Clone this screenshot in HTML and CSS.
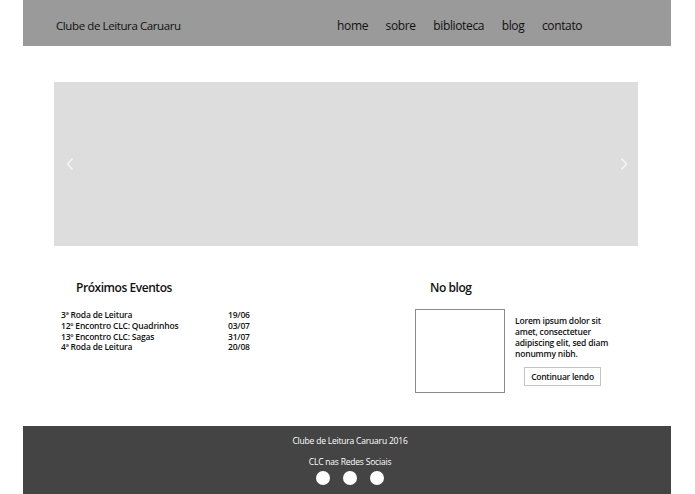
FILE: index.html
```html
<!DOCTYPE html>
<html lang="pt">
<head>
<meta charset="utf-8">
<title>Clube de Leitura Caruaru</title>
<link rel="stylesheet" href="styles.css">
</head>
<body>
<div class="page">
  <header class="header">
    <div class="brand">Clube de Leitura Caruaru</div>
    <nav class="nav">
      <a>home</a><a>sobre</a><a>biblioteca</a><a>blog</a><a>contato</a>
    </nav>
  </header>

  <section class="carousel">
    <svg class="arrow" width="8" height="14" viewBox="0 0 8 14"><polyline points="6.5,1.5 1.5,7 6.5,12.5" fill="none" stroke="#f4f4f4" stroke-width="1.6"/></svg>
    <svg class="arrow" width="8" height="14" viewBox="0 0 8 14"><polyline points="1.5,1.5 6.5,7 1.5,12.5" fill="none" stroke="#f4f4f4" stroke-width="1.6"/></svg>
  </section>

  <section class="content">
    <div class="events">
      <h2 class="heading">Próximos Eventos</h2>
      <ul class="event-list">
        <li><span class="ev-name">3ª Roda de Leitura</span><span>19/06</span></li>
        <li><span class="ev-name">12º Encontro CLC: Quadrinhos</span><span>03/07</span></li>
        <li><span class="ev-name">13º Encontro CLC: Sagas</span><span>31/07</span></li>
        <li><span class="ev-name">4ª Roda de Leitura</span><span>20/08</span></li>
      </ul>
    </div>
    <div class="blog">
      <h2 class="heading">No blog</h2>
      <div class="post">
        <div class="thumb"></div>
        <div class="post-body">
          <p>Lorem ipsum dolor sit amet, consectetuer adipiscing elit, sed diam nonummy nibh.</p>
          <button class="more">Continuar lendo</button>
        </div>
      </div>
    </div>
  </section>

  <footer class="footer">
    <div class="f-line">Clube de Leitura Caruaru 2016</div>
    <div class="f-line f-social">CLC nas Redes Sociais</div>
    <div class="dots"><span></span><span></span><span></span></div>
  </footer>
</div>
</body>
</html>
```

FILE: styles.css
```css
* { box-sizing: border-box; }
html, body { margin: 0; padding: 0; background: #fff; }
body { font-family: "Open Sans", "Liberation Sans", sans-serif; color: #111; }

.page { width: 695px; }

.header {
  margin-left: 23px;
  width: 648px;
  height: 46px;
  background: #9a9a9a;
  display: flex;
  align-items: center;
  padding-left: 33px;
  padding-top: 4px;
}
.brand {
  font-size: 11.5px;
  letter-spacing: -0.4px;
  width: 281px;
  color: #111;
}
.nav { display: flex; gap: 17.5px; font-size: 12px; letter-spacing: -0.35px; }
.nav a { color: #111; }

.carousel {
  margin: 36px 0 0 54px;
  width: 584px;
  height: 164px;
  background: #dddddd;
  display: flex;
  justify-content: space-between;
  align-items: center;
  padding: 0 10px 0 12px;
}

.content {
  display: flex;
  margin-top: 33px;
  height: 147px;
}
.heading {
  margin: 0;
  font-size: 12px;
  font-weight: 600;
  letter-spacing: -0.45px;
  color: #111;
}
.events { width: 415px; padding-left: 61px; }
.events .heading { padding-left: 15px; }
.event-list {
  list-style: none;
  margin: 14px 0 0;
  padding: 0;
  font-size: 8.5px;
  line-height: 10.8px;
  font-weight: 600;
  letter-spacing: -0.2px;
}
.event-list li { display: flex; }
.ev-name { width: 167px; }

.blog .heading { padding-left: 15px; }
.post { display: flex; margin-top: 13px; }
.thumb {
  width: 90px;
  height: 84px;
  border: 1px solid #8a8a8a;
  background: #fff;
}
.post-body { margin-left: 10px; width: 110px; padding-top: 7px; }
.post-body p {
  margin: 0;
  font-size: 8.5px;
  line-height: 10.9px;
  font-weight: 600;
  letter-spacing: -0.2px;
}
.more {
  margin: 7px 0 0 9px;
  width: 77px;
  height: 19px;
  padding: 0;
  background: #fff;
  border: 1px solid #c4c4c4;
  font-family: inherit;
  font-size: 8.5px;
  font-weight: 600;
  color: #111;
  letter-spacing: -0.25px;
}

.footer {
  margin-left: 23px;
  width: 648px;
  height: 68px;
  background: #444444;
  color: #fff;
  display: flex;
  flex-direction: column;
  align-items: center;
  padding-top: 9px;
  padding-left: 6px;
}
.f-line { font-size: 8.5px; letter-spacing: -0.2px; line-height: 12px; }
.f-social { margin-top: 9px; }
.dots { display: flex; gap: 13px; margin-top: 3px; }
.dots span {
  width: 14px;
  height: 14px;
  border-radius: 50%;
  background: #fff;
}
```
